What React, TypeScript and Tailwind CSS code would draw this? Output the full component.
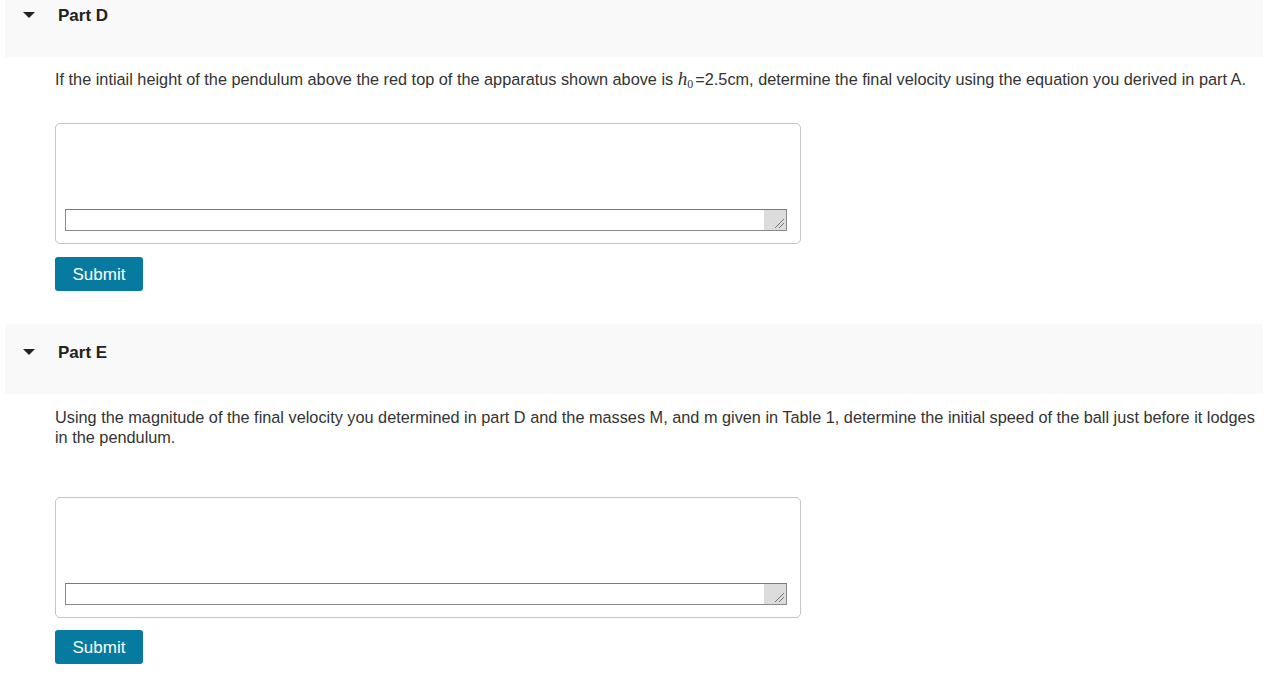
import React from "react";

function Header({ title }: { title: string }) {
  return (
    <div className="ml-[5px] mr-[4px] h-[70px] bg-[#f9f9f9] flex items-start pt-[19px]">
      <div className="w-[53px] pl-[18px] pt-[6px]">
        <svg width="12" height="6" viewBox="0 0 12 6" className="block">
          <polygon points="0,0 12,0 6,6" fill="#222" />
        </svg>
      </div>
      <span className="text-[17px] font-bold text-[#222] leading-[20px]">{title}</span>
    </div>
  );
}

function AnswerBox() {
  return (
    <div className="w-[746px] h-[121px] border border-[#c4c4c4] rounded-[5px] bg-white flex flex-col justify-end pb-[12px] pl-[9px] pr-[13px]">
      <div className="h-[22px] border border-[#8a8a8a] border-t-[#7a7a7a] flex bg-white">
        <div className="flex-1" />
        <div className="w-[22px] h-full bg-[#dcdcdc] relative">
          <svg width="12" height="12" viewBox="0 0 12 12" className="absolute right-[1px] bottom-[1px]">
            <line x1="11" y1="2" x2="2" y2="11" stroke="#666" strokeWidth="0.9" />
            <line x1="11" y1="6" x2="6" y2="11" stroke="#666" strokeWidth="0.9" />
          </svg>
        </div>
      </div>
    </div>
  );
}

function SubmitBtn() {
  return (
    <button className="w-[88px] h-[34px] bg-[#077b9f] rounded-[3px] text-white text-[17px] leading-none">
      Submit
    </button>
  );
}

export default function App() {
  return (
    <div
      className="bg-white w-[1267px] h-[691px] overflow-hidden text-[#333]"
      style={{ fontFamily: '"Liberation Sans", Arial, sans-serif' }}
    >
      <div className="mt-[-13px]">
        <Header title="Part D" />
        <div className="pl-[55px] pr-[5px]">
          <p className="mt-[12px] text-[16.3px] leading-[20px]">
            If the intiail height of the pendulum above the red top of the apparatus shown above is{" "}
            <span className="italic text-[19px]" style={{ fontFamily: '"Liberation Serif", "Times New Roman", serif' }}>
              h
            </span>
            <sub className="text-[12px] mr-[2px]" style={{ fontFamily: '"Liberation Serif", serif' }}>0</sub>
            =2.5cm, determine the final velocity using the equation you derived in part A.
          </p>
          <div className="mt-[34px]">
            <AnswerBox />
          </div>
          <div className="mt-[13px]">
            <SubmitBtn />
          </div>
        </div>
        <div className="mt-[33px]">
          <Header title="Part E" />
        </div>
        <div className="pl-[55px] pr-[5px]">
          <p className="mt-[13px] text-[16.3px] leading-[20px]">
            Using the magnitude of the final velocity you determined in part D and the masses M, and m given in Table 1, determine the initial speed of the ball just before it lodges in the pendulum.
          </p>
          <div className="mt-[50px]">
            <AnswerBox />
          </div>
          <div className="mt-[12px]">
            <SubmitBtn />
          </div>
        </div>
      </div>
    </div>
  );
}
